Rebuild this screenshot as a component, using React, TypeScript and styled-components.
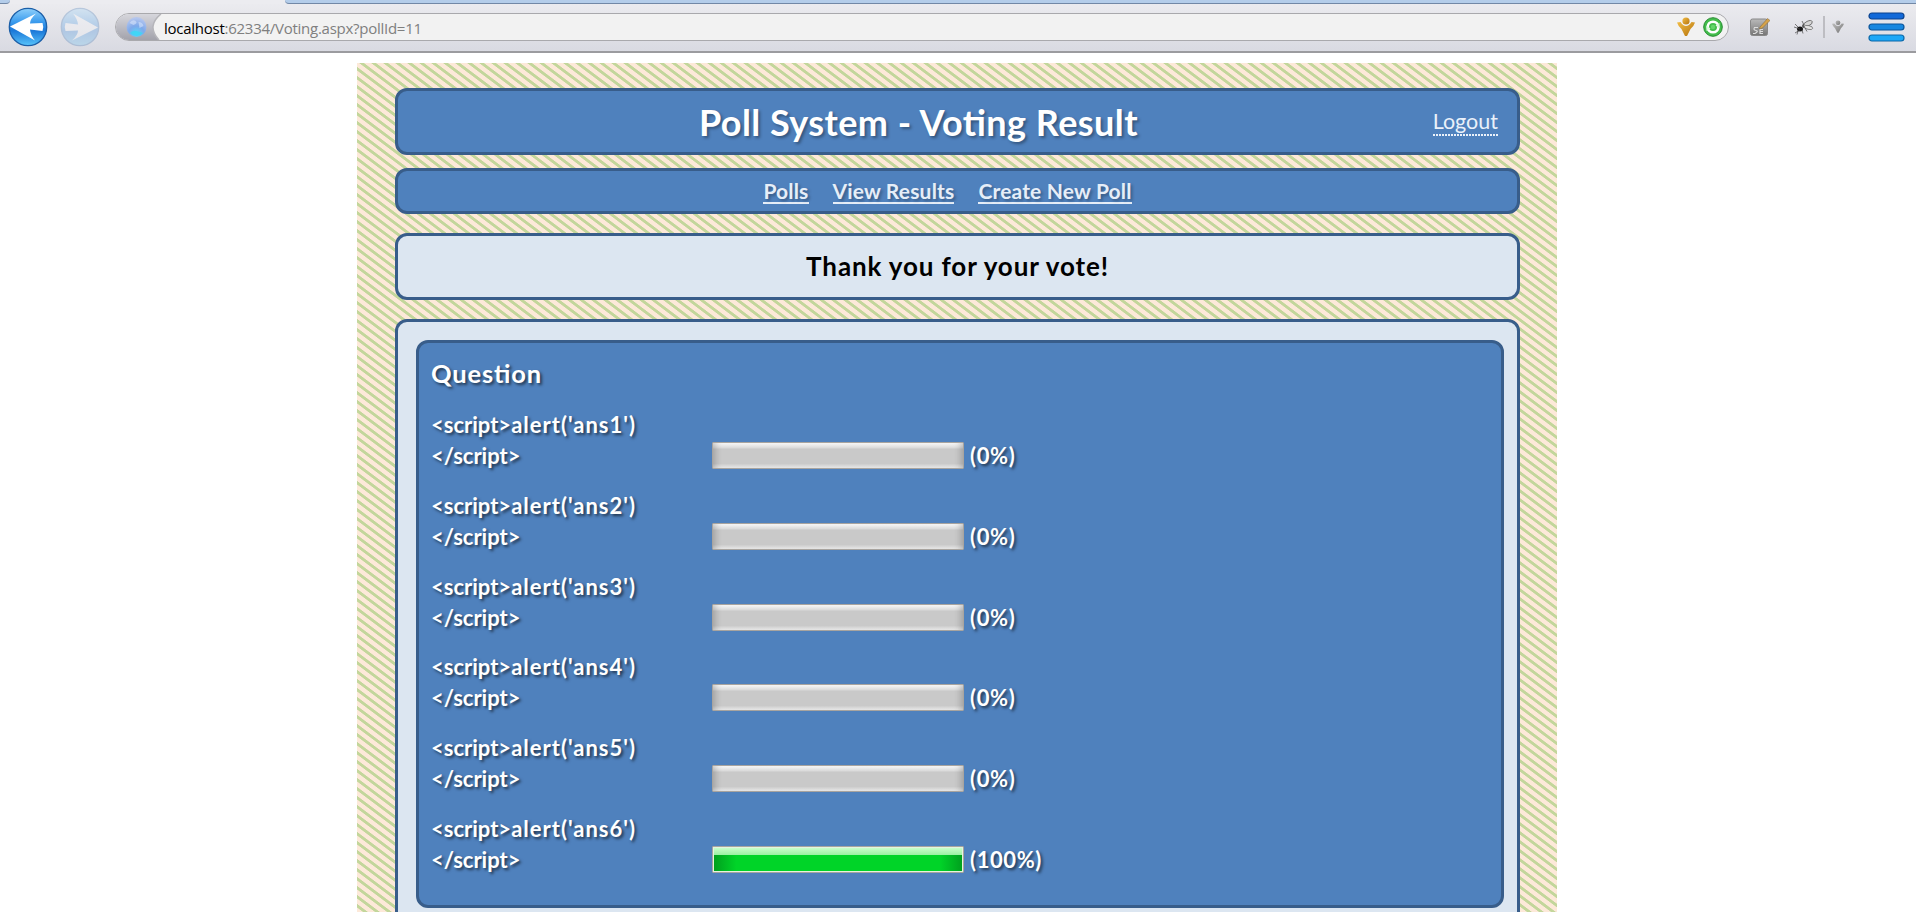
import React from 'react';
import styled, { createGlobalStyle } from 'styled-components';

const GlobalStyle = createGlobalStyle`
  * { box-sizing: border-box; }
  html, body { margin: 0; padding: 0; background: #fff; }
  body {
    height: 912px;
    overflow: hidden;
    font-family: Lato, "Liberation Sans", sans-serif;
    font-feature-settings: "liga" 1;
  }
`;

const Page = styled.div`
  display: flex;
  flex-direction: column;
  height: 912px;
  overflow: hidden;
`;

/* ---------- browser chrome ---------- */

const TabStrip = styled.div`
  display: flex;
  height: 4px;
  flex: none;
  background: #ececf0;
`;

const TabEdge = styled.div<{ $w?: number; $side: 'left' | 'right' }>`
  ${(p) => (p.$w ? `width: ${p.$w}px;` : 'flex: 1;')}
  background: #b4cdea;
  border-bottom: 1px solid #7288a6;
  border-radius: ${(p) => (p.$side === 'left' ? '0 0 8px 0' : '0 0 0 8px')};
`;

const ActiveTab = styled.div`
  width: 275px;
`;

const Toolbar = styled.div`
  display: flex;
  align-items: center;
  flex: none;
  height: 49px;
  padding: 0 10px 2px 8px;
  background: linear-gradient(#ebebef, #d9dae2);
  border-bottom: 2px solid #9b9b9f;
`;

const NavIcon = styled.svg<{ $faded?: boolean }>`
  flex: none;
  width: 40px;
  height: 40px;
  margin-right: 12px;
  opacity: ${(p) => (p.$faded ? 0.24 : 1)};
`;

const AddressBar = styled.div`
  display: flex;
  align-items: center;
  width: 1614px;
  height: 28px;
  margin-left: 3px;
  border: 1px solid #a9a9ad;
  border-radius: 14px;
  background: #f2f2f2;
  overflow: hidden;
`;

const SiteBadge = styled.svg`
  flex: none;
  width: 48px;
  height: 26px;
`;

const Url = styled.div`
  flex: 1;
  padding-top: 2px;
  font: 15px/24px "Open Sans", sans-serif;
  letter-spacing: -0.26px;
  color: #7f7f7f;
  white-space: pre;
  b { font-weight: 400; color: #000; }
`;

const BarIcon = styled.svg<{ $w: number; $h: number; $ml?: number; $mr?: number }>`
  flex: none;
  width: ${(p) => p.$w}px;
  height: ${(p) => p.$h}px;
  margin-left: ${(p) => p.$ml ?? 0}px;
  margin-right: ${(p) => p.$mr ?? 0}px;
`;

const Divider = styled.div`
  width: 2px;
  height: 22px;
  margin-left: 9px;
  background: #bdbdc2;
`;

/* ---------- page ---------- */

const Wrapper = styled.div`
  width: 1200px;
  flex: 1 0 auto;
  margin: 10px 0 0 357px;
  padding: 25px 37px 0 38px;
  background: repeating-linear-gradient(36.87deg, #fde9d9 0 0.9px, #c3d69b 1.6px 3.8px, #fde9d9 4.5px 7.2px) 0 0 / 12px 9px;
`;

const Box = styled.div<{ $h: number; $mt?: number; $light?: boolean }>`
  display: flex;
  align-items: center;
  height: ${(p) => p.$h}px;
  margin-top: ${(p) => p.$mt ?? 0}px;
  border: 3px solid #385d8a;
  border-radius: 12px;
  background: ${(p) => (p.$light ? '#dce6f1' : '#4f81bd')};
`;

const Header = styled(Box)`
  display: grid;
  grid-template-columns: 1fr auto 1fr;
  padding: 0 19px 0 0;
`;

const Title = styled.h1`
  grid-column: 2;
  margin: 0 59px 0 0;
  font-size: 36px;
  line-height: 44px;
  color: #fff;
  white-space: nowrap;
  letter-spacing: 0.45px;
  text-shadow: 2px 2px 3px rgba(0, 0, 0, 0.35);
`;

const Logout = styled.a`
  justify-self: end;
  padding-bottom: 2px;
  font-size: 21.5px;
  line-height: 26px;
  color: #eaf1fa;
  background: repeating-linear-gradient(90deg, #eaf1fa 0 2px, transparent 2px 3px) 0 100% / 100% 2px no-repeat;
`;

const Nav = styled(Box)`
  justify-content: center;
  gap: 24px;
  padding: 0 20px 2px 0;
`;

const NavLink = styled.a`
  padding-top: 3px;
  font-size: 21px;
  line-height: 22px;
  font-weight: 700;
  color: #e6eef8;
  letter-spacing: 0.17px;
  border-bottom: 2px solid #e6eef8;
  text-shadow: 2px 2px 3px rgba(0, 0, 0, 0.3);
`;

const Thanks = styled(Box)`
  justify-content: center;
  padding-bottom: 2px;
  font-size: 26px;
  font-weight: 700;
  letter-spacing: 0.87px;
  color: #000;
`;

const Results = styled.div`
  height: 700px;
  margin-top: 19px;
  padding: 18px 13px 0 18px;
  border: 3px solid #385d8a;
  border-radius: 12px;
  background: #dce6f1;
`;

const Poll = styled.div`
  height: 568px;
  padding: 13px 12px;
  border: 3px solid #385d8a;
  border-radius: 12px;
  background: #4f81bd;
  color: #fff;
  font-weight: 700;
  text-shadow: 2px 2px 3px rgba(0, 0, 0, 0.6);
`;

const Question = styled.h2`
  margin: 0 0 18px;
  font-size: 25.5px;
  line-height: 35px;
  letter-spacing: 0.85px;
`;

const Answer = styled.div`
  display: flex;
  align-items: flex-end;
  height: 62px;
  margin-bottom: 18.8px;
`;

const AnswerText = styled.div`
  width: 281px;
  font-size: 22px;
  line-height: 31px;
  white-space: pre-line;
`;

const Call = styled.span`
  letter-spacing: 1px;
`;

const Bar = styled.div`
  width: 252px;
  height: 27px;
  margin-bottom: 2px;
  padding: 1px;
  border: 1px solid #a8a49f;
  border-radius: 1px;
  background: linear-gradient(#f8f8f8, #d9d9d9 20%, #c9c9c9 24%, #c9c9c9 82%, #e8e8e8);
  box-shadow: inset 8px 0 7px -6px rgba(0, 0, 0, 0.22), inset -8px 0 7px -6px rgba(0, 0, 0, 0.22);
`;

const Fill = styled.div`
  height: 100%;
  background:
    linear-gradient(#c8ffca, #9af0a2) 0 0 / 100% 7px no-repeat,
    linear-gradient(90deg, #00a01e, #00d428 9%, #00d428 91%, #00a01e);
  box-shadow: 0 0 0 1px #e4f5df;
`;

const Percent = styled.div`
  margin-left: 6px;
  font-size: 22px;
  line-height: 31px;
  letter-spacing: 0.6px;
`;

const answers = [0, 0, 0, 0, 0, 100];

const Arrow = ({ forward }: { forward?: boolean }) => (
  <NavIcon $faded={forward} viewBox="0 0 40 40">
    <defs>
      <linearGradient id="orb" x1="0" y1="0" x2="0" y2="1">
        <stop offset="0" stopColor="#8fd0fb" />
        <stop offset="0.35" stopColor="#3d9dee" />
        <stop offset="0.6" stopColor="#1b78d8" />
        <stop offset="1" stopColor="#58c4fb" />
      </linearGradient>
    </defs>
    <circle cx="20" cy="20" r="18.7" fill="url(#orb)" stroke="#1c5fa8" strokeWidth="1.3" />
    <path
      d="M2 19.5 28 6.500Q22 12 22 16.500L34.500 16Q36 20 34.500 24L22 22.500Q22.500 28 27 33.500Z"
      fill="#fff"
      transform={forward ? 'rotate(180 20 20)' : undefined}
    />
  </NavIcon>
);

const Figure = ({ id, a, b }: { id: string; a: string; b: string }) => (
  <g>
    <defs>
      <linearGradient id={id} x1="0" y1="0" x2="1" y2="1">
        <stop offset="0" stopColor={a} />
        <stop offset="1" stopColor={b} />
      </linearGradient>
    </defs>
    <circle cx="9" cy="4" r="3.600" fill={`url(#${id})`} />
    <path d="M0 5.500 3.500 5Q6 9 9 9T14.500 5L18 5.500Q16.500 10 13.500 12L10 19H8L4.500 12Q1.500 10 0 5.500Z" fill={`url(#${id})`} />
  </g>
);

export default function App() {
  return (
    <Page>
      <GlobalStyle />
      <TabStrip>
        <TabEdge $w={10} $side="left" />
        <ActiveTab />
        <TabEdge $side="right" />
      </TabStrip>
      <Toolbar>
        <Arrow />
        <Arrow forward />
        <AddressBar>
          <SiteBadge viewBox="0 0 48 26">
            <defs>
              <linearGradient id="badge" x1="0" y1="0" x2="0" y2="1">
                <stop offset="0" stopColor="#d6d6dc" />
                <stop offset="1" stopColor="#a2a2ab" />
              </linearGradient>
              <radialGradient id="globe" cx="0.5" cy="0.85" r="0.8">
                <stop offset="0" stopColor="#5ad8fb" />
                <stop offset="0.5" stopColor="#7ea9ea" />
                <stop offset="1" stopColor="#b5c6ee" />
              </radialGradient>
            </defs>
            <path d="M0 0H45Q30 13 43 26H0Z" fill="url(#badge)" />
            <path d="M45 0Q30 12 43 26" fill="none" stroke="#b5b5ba" strokeWidth="1.500" />
            <circle cx="20.500" cy="13" r="10" fill="url(#globe)" />
            <path d="M13.500 9q3-4 6-2t-2 4ZM22.500 8q4 0 5 4l-4 2Z" fill="#dce8fb" opacity="0.55" />
            <path d="M14 19q3-3 6.500-2t6.500 2q-6 6-13 0Z" fill="#39d7f5" opacity="0.8" />
          </SiteBadge>
          <Url><b>localhost</b>:62334/Voting.aspx?pollId=11</Url>
          <BarIcon $w={18} $h={19} viewBox="0 0 18 19">
            <Figure id="gold" a="#f2bd45" b="#b5730c" />
          </BarIcon>
          <BarIcon $w={20} $h={20} $ml={8} $mr={5} viewBox="0 0 20 20">
            <circle cx="10" cy="10" r="9.300" fill="#43bd4b" stroke="#278b31" />
            <circle cx="10" cy="10" r="5.300" fill="none" stroke="#fff" strokeWidth="2.600" />
            <path d="M12.500 8.500 16.500 6v5.500ZM7.500 11.500 3.500 14V8.500Z" fill="#dff8df" />
            <circle cx="10" cy="10" r="2.200" fill="#64d56a" />
          </BarIcon>
        </AddressBar>
        <BarIcon $w={20} $h={18} $ml={21} viewBox="0 0 20 18">
          <defs>
            <linearGradient id="note" x1="0" y1="0" x2="0" y2="1">
              <stop offset="0" stopColor="#bababa" />
              <stop offset="1" stopColor="#757575" />
            </linearGradient>
          </defs>
          <rect x="0.500" y="1" width="17" height="16.500" rx="2" fill="url(#note)" stroke="#888" />
          <path d="M8 9.500H4.500Q3 12 6 12.500T5 15.500H3M13 11.500h-3v4h3M10 13.500h3" fill="none" stroke="#ddd" strokeWidth="1.200" />
          <path d="M10 9 17.500 0.500 20 2.500 12.500 10 9.500 11Z" fill="#d5a34a" stroke="#806335" strokeWidth="0.500" />
        </BarIcon>
        <BarIcon $w={20} $h={16} $ml={24} viewBox="0 0 20 16">
          <ellipse cx="6" cy="10" rx="3" ry="2.500" fill="#161616" />
          <circle cx="10" cy="7" r="2" fill="#555" />
          <ellipse cx="14" cy="4.500" rx="4.600" ry="2.300" fill="#d5d5d5" stroke="#555" strokeWidth="0.700" transform="rotate(-25 14 4.500)" />
          <ellipse cx="14.500" cy="8.500" rx="4.300" ry="1.900" fill="#e2e2e2" stroke="#666" strokeWidth="0.700" transform="rotate(12 14.500 8.500)" />
          <path d="M6 10 0 8M6 11 1 14M4 8 1 5M8 11 9 14.500M10 6 8 2M11 9 13 12.500M4 12 3 15.500" stroke="#444" strokeWidth="0.700" />
        </BarIcon>
        <Divider />
        <BarIcon $w={12} $h={13} $ml={7} viewBox="0 0 18 19">
          <Figure id="silver" a="#bdbdbd" b="#777777" />
        </BarIcon>
        <BarIcon $w={38} $h={32} $ml={24} viewBox="0 0 38 32">
          <rect x="1" y="2" width="35" height="6" rx="3" fill="#1269d8" stroke="#0b438e" strokeWidth="1.200" />
          <rect x="1" y="13" width="35" height="6" rx="3" fill="#1787e0" stroke="#0b559a" strokeWidth="1.200" />
          <rect x="1" y="24" width="35" height="6" rx="3" fill="#1ca7f7" stroke="#0b69aa" strokeWidth="1.200" />
        </BarIcon>
      </Toolbar>

      <Wrapper>
        <Header $h={67}>
          <Title>Poll System - Voting Result</Title>
          <Logout>Logout</Logout>
        </Header>
        <Nav $h={46} $mt={13}>
          <NavLink>Polls</NavLink>
          <NavLink>View Results</NavLink>
          <NavLink>Create New Poll</NavLink>
        </Nav>
        <Thanks $h={67} $mt={19} $light>Thank you for your vote!</Thanks>
        <Results>
          <Poll>
            <Question>Question</Question>
            {answers.map((value, i) => (
              <Answer key={i}>
                <AnswerText>
                  {'<script>'}
                  <Call>{`alert('ans${i + 1}')`}</Call>
                  {'\n</script>'}
                </AnswerText>
                <Bar>{value > 0 && <Fill style={{ width: `${value}%` }} />}</Bar>
                <Percent>({value}%)</Percent>
              </Answer>
            ))}
          </Poll>
        </Results>
      </Wrapper>
    </Page>
  );
}
